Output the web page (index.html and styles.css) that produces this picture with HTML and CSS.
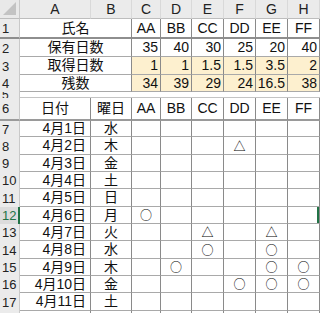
FILE: index.html
```html
<!DOCTYPE html>
<html lang="ja">
<head>
<meta charset="utf-8">
<link rel="stylesheet" href="styles.css">
</head>
<body>
<div class="sheet">
  <!-- column headers -->
  <div class="corner"><span class="tri"></span></div>
  <div class="ch">A</div><div class="ch">B</div><div class="ch">C</div><div class="ch">D</div>
  <div class="ch">E</div><div class="ch">F</div><div class="ch">G</div><div class="ch">H</div>

  <!-- row 1 -->
  <div class="rh r1">1</div>
  <div class="c span2 r1 ctr">氏名</div>
  <div class="c r1 ctr">AA</div><div class="c r1 ctr">BB</div><div class="c r1 ctr">CC</div>
  <div class="c r1 ctr">DD</div><div class="c r1 ctr">EE</div><div class="c r1 ctr">FF</div>

  <!-- row 2 -->
  <div class="rh">2</div>
  <div class="c span2 ctr">保有日数</div>
  <div class="c num">35</div><div class="c num">40</div><div class="c num">30</div>
  <div class="c num">25</div><div class="c num">20</div><div class="c num">40</div>

  <!-- row 3 -->
  <div class="rh">3</div>
  <div class="c span2 ctr">取得日数</div>
  <div class="c num fill">1</div><div class="c num fill">1</div><div class="c num fill">1.5</div>
  <div class="c num fill">1.5</div><div class="c num fill">3.5</div><div class="c num fill">2</div>

  <!-- row 4 -->
  <div class="rh">4</div>
  <div class="c span2 ctr">残数</div>
  <div class="c num fill">34</div><div class="c num fill">39</div><div class="c num fill">29</div>
  <div class="c num fill">24</div><div class="c num fill">16.5</div><div class="c num fill">38</div>

  <!-- row 5 -->
  <div class="rh short"><span>5</span></div>
  <div class="gap"></div>

  <!-- row 6 -->
  <div class="rh r6">6</div>
  <div class="c r6 ctr">日付</div><div class="c r6 ctr">曜日</div>
  <div class="c r6 ctr">AA</div><div class="c r6 ctr">BB</div><div class="c r6 ctr">CC</div>
  <div class="c r6 ctr">DD</div><div class="c r6 ctr">EE</div><div class="c r6 ctr">FF</div>

  <!-- row 7 -->
  <div class="rh">7</div>
  <div class="c date">4月1日</div><div class="c ctr">水</div>
  <div class="c"></div><div class="c"></div><div class="c"></div><div class="c"></div><div class="c"></div><div class="c"></div>

  <!-- row 8 -->
  <div class="rh">8</div>
  <div class="c date">4月2日</div><div class="c ctr">木</div>
  <div class="c"></div><div class="c"></div><div class="c"></div><div class="c mark">△</div><div class="c"></div><div class="c"></div>

  <!-- row 9 -->
  <div class="rh">9</div>
  <div class="c date">4月3日</div><div class="c ctr">金</div>
  <div class="c"></div><div class="c"></div><div class="c"></div><div class="c"></div><div class="c"></div><div class="c"></div>

  <!-- row 10 -->
  <div class="rh">10</div>
  <div class="c date">4月4日</div><div class="c ctr">土</div>
  <div class="c"></div><div class="c"></div><div class="c"></div><div class="c"></div><div class="c"></div><div class="c"></div>

  <!-- row 11 -->
  <div class="rh">11</div>
  <div class="c date">4月5日</div><div class="c ctr">日</div>
  <div class="c"></div><div class="c"></div><div class="c"></div><div class="c"></div><div class="c"></div><div class="c"></div>

  <!-- row 12 (active row) -->
  <div class="rh active">12</div>
  <div class="c date">4月6日</div><div class="c ctr">月</div>
  <div class="c mark">○</div><div class="c"></div><div class="c"></div><div class="c"></div><div class="c"></div><div class="c sel-edge"></div>

  <!-- row 13 -->
  <div class="rh">13</div>
  <div class="c date">4月7日</div><div class="c ctr">火</div>
  <div class="c"></div><div class="c"></div><div class="c mark">△</div><div class="c"></div><div class="c mark">△</div><div class="c"></div>

  <!-- row 14 -->
  <div class="rh">14</div>
  <div class="c date">4月8日</div><div class="c ctr">水</div>
  <div class="c"></div><div class="c"></div><div class="c mark">○</div><div class="c"></div><div class="c mark">○</div><div class="c"></div>

  <!-- row 15 -->
  <div class="rh">15</div>
  <div class="c date">4月9日</div><div class="c ctr">木</div>
  <div class="c"></div><div class="c mark">○</div><div class="c"></div><div class="c"></div><div class="c mark">○</div><div class="c mark">○</div>

  <!-- row 16 -->
  <div class="rh">16</div>
  <div class="c date">4月10日</div><div class="c ctr">金</div>
  <div class="c"></div><div class="c"></div><div class="c"></div><div class="c mark">○</div><div class="c mark">○</div><div class="c mark">○</div>

  <!-- row 17 -->
  <div class="rh">17</div>
  <div class="c date">4月11日</div><div class="c ctr">土</div>
  <div class="c"></div><div class="c"></div><div class="c"></div><div class="c"></div><div class="c"></div><div class="c"></div>

  <!-- row 18 (partial) -->
  <div class="rh"></div>
  <div class="c"></div><div class="c"></div>
  <div class="c"></div><div class="c"></div><div class="c"></div><div class="c"></div><div class="c"></div><div class="c"></div>
</div>
</body>
</html>
```

FILE: styles.css
```css
html, body {
  margin: 0;
  padding: 0;
  background: #ffffff;
  overflow: hidden;
}

.sheet {
  width: 320px;
  height: 313px;
  overflow: hidden;
  display: grid;
  grid-template-columns: 20px 71px 41px 29px 31px 32px 32px 32px 32px;
  grid-template-rows: 19px 20px 18px 18px 17px 6px 23px 16px 18px 17px 17px 18px 17px 17px 18px 17px 17px 18px 18px;
  font-family: "Liberation Sans", "Noto Sans CJK JP", sans-serif;
  font-size: 14px;
  color: #111;
}

.sheet > div {
  box-sizing: border-box;
  display: flex;
  align-items: center;
  overflow: hidden;
  white-space: nowrap;
  line-height: 15px;
}

.corner {
  background: #e9e9e9;
  border-right: 1px solid #c9c9c9;
  border-bottom: 1px solid #bdbdbd;
  position: relative;
}

.tri {
  position: absolute;
  right: 3px;
  bottom: 3px;
  width: 0;
  height: 0;
  border-left: 13px solid transparent;
  border-bottom: 13px solid #c3c3c3;
}

.ch {
  background: #ebebeb;
  justify-content: center;
  border-right: 1px solid #d9d9d9;
  border-bottom: 1px solid #bdbdbd;
  color: #222;
  font-size: 14px;
}

.rh {
  background: #ebebeb;
  border-right: 1px solid #c9c9c9;
  padding-left: 2px;
  font-size: 13px;
  color: #222;
}

.rh.r1 { border-bottom: 2px solid #8e8e8e; }
.rh.r6 { border-bottom: 2px solid #9a9a9a; }

.sheet > .rh.short {
  align-items: flex-end;
  line-height: 6px;
  font-size: 12px;
}

.rh.active {
  background: #dcdcdc;
  color: #217346;
  border-right: 2px solid #217346;
}

.c {
  border-right: 1px solid #8a8a8a;
  border-bottom: 1px solid #a9a9a9;
  font-family: "Liberation Sans", "Noto Sans CJK JP", sans-serif;
}

.c.r1 { border-bottom: 2px solid #8e8e8e; }
.c.r6 { border-bottom: 2px solid #9a9a9a; }

.span2 { grid-column: span 2; }

.ctr { justify-content: center; }

.num {
  justify-content: flex-end;
  padding-right: 2px;
}

.date {
  justify-content: flex-end;
  padding-right: 4px;
}

.fill { background: #fdf0cf; }

.gap {
  grid-column: span 8;
  border-bottom: 1px solid #c4c4c4;
}

.sheet > .mark {
  justify-content: center;
  font-family: "Noto Sans CJK JP", sans-serif;
  font-size: 12px;
  line-height: 12px;
  color: #000;
}

.sel-edge {
  position: relative;
}

.sel-edge::after {
  content: "";
  position: absolute;
  right: 0;
  top: -1px;
  bottom: -1px;
  width: 2px;
  background: #217346;
}
```
